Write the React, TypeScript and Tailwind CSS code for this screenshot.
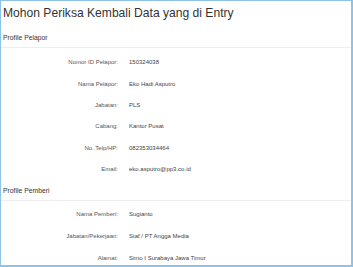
import React from "react";

const pelapor: [string, string][] = [
  ["Nomor ID Pelapor:", "150324038"],
  ["Nama Pelapor:", "Eko Hadi Asputro"],
  ["Jabatan:", "PLS"],
  ["Cabang:", "Kantor Pusat"],
  ["No. Telp/HP:", "082353034464"],
  ["Email:", "eko.asputro@pp3.co.id"],
];

const pemberi: [string, string][] = [
  ["Nama Pemberi:", "Sugianto"],
  ["Jabatan/Pekerjaan:", "Staf / PT Angga Media"],
  ["Alamat:", "Simo I Surabaya Jawa Timur"],
];

function Row({ label, value, h }: { label: string; value: string; h: string }) {
  return (
    <div className={`flex items-center ${h}`}>
      <div className="w-[117px] text-right text-[6px] text-[#555]">{label}</div>
      <div className="pl-[11px] text-[6px] text-[#444]">{value}</div>
    </div>
  );
}

export default function App() {
  return (
    <div className="w-[353px] h-[267px] bg-white border-l border-t border-r-2 border-b-2 border-[#8cc3e6] overflow-hidden font-['Liberation_Sans',Arial,sans-serif]">
      <div className="pl-[2px] pt-[4px] text-[12.1px] leading-[16px] text-[#333]">
        Mohon Periksa Kembali Data yang di Entry
      </div>
      <div className="mt-[11px] pl-[2px] text-[6.8px] leading-[12px] text-[#333] pb-[3px] border-b border-[#eee]">
        Profile Pelapor
      </div>
      <div className="pt-[4px]">
        {pelapor.map(([l, v]) => (
          <Row key={l} label={l} value={v} h="h-[21.4px]" />
        ))}
      </div>
      <div className="mt-[5px] pl-[2px] text-[6.8px] leading-[12px] text-[#333] pb-[3px] border-b border-[#eee]">
        Profile Pemberi
      </div>
      <div className="pt-[2px]">
        {pemberi.map(([l, v]) => (
          <Row key={l} label={l} value={v} h="h-[22px]" />
        ))}
      </div>
    </div>
  );
}
